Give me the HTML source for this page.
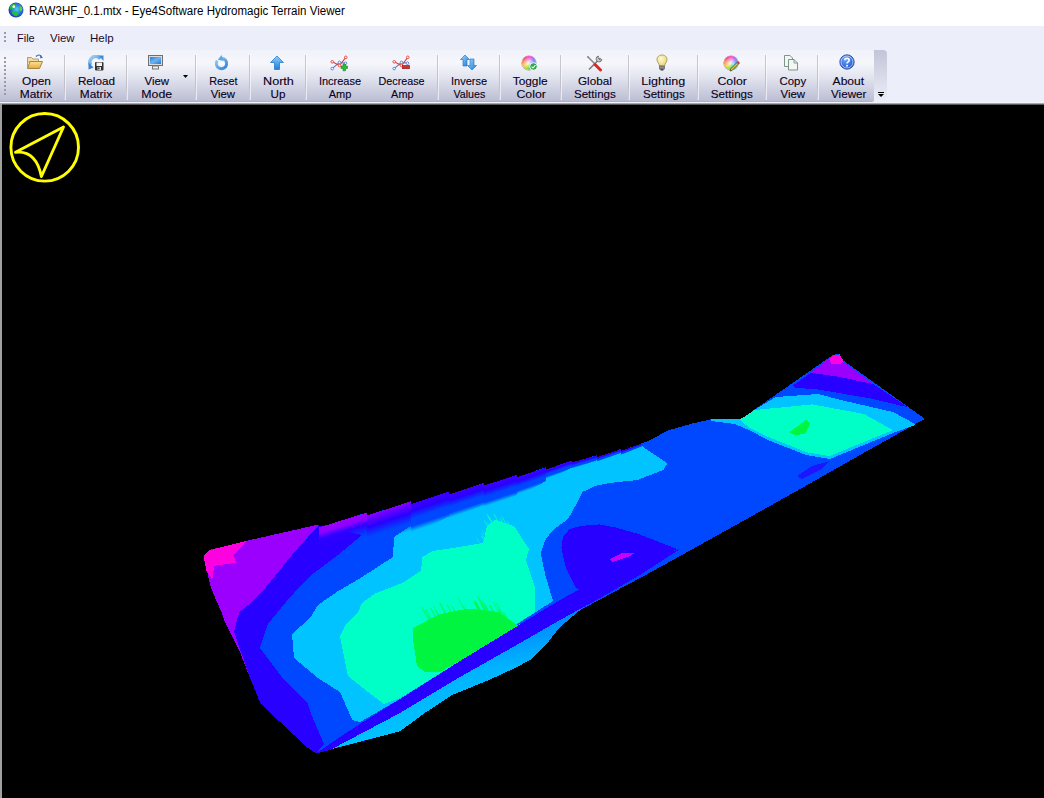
<!DOCTYPE html>
<html><head><meta charset="utf-8">
<style>
*{margin:0;padding:0;box-sizing:border-box}
html,body{width:1044px;height:798px;overflow:hidden;background:#000;font-family:"Liberation Sans",sans-serif;color:#1e0a3c}
#title{position:absolute;left:0;top:0;width:1044px;height:26px;background:#fff}
#title .t{position:absolute;left:29px;top:3.6px;font-size:12px;line-height:14px;color:#000;white-space:nowrap;transform:scaleX(0.961);transform-origin:0 0}
#menu{position:absolute;left:0;top:26px;width:1044px;height:77px;background:#ecEFFA}
#menu .m{position:absolute;top:5.8px;font-size:11px;line-height:13px;color:#1a0a2a}
#tb{position:absolute;left:0px;top:50px;width:875px;height:52px;border-radius:3px 4px 4px 0;background:linear-gradient(#f0f2fa 0%,#f6f7fc 25%,#e0e2ee 55%,#bcbfd4 97%,#a9abc0 100%)}
#ovf{position:absolute;left:874px;top:50px;width:13px;height:52px;border-radius:0 4px 4px 0;background:linear-gradient(#c3c5d8,#eceef9)}
#line{position:absolute;left:0;top:102px;width:1044px;height:3px;background:linear-gradient(#f0f2fc 0 1px,#a8a8a8 1px 2px,#5a5a5a 2px 3px)}
#lb{position:absolute;left:0;top:104px;width:2px;height:694px;background:#a0a0a0}
.sep{position:absolute;top:55px;width:1px;height:45px;background:linear-gradient(#c8c8cc,#c0c0c8 70%,#d0d0dc);box-shadow:1px 0 0 rgba(255,255,255,0.6)}
.btn{position:absolute;top:74.7px;width:80px;margin-left:-40px;text-align:center;font-size:11px;line-height:13px;color:#0c0020;white-space:nowrap}
.ic{position:absolute;top:55px;width:16px;height:16px;margin-left:-8px}
.i{position:absolute}
.btn span{display:inline-block;-webkit-text-stroke:0.12px #0c0020}
#view{position:absolute;left:2px;top:105px;width:1042px;height:693px;background:#000;overflow:hidden}
</style></head><body>
<div id="title">
<svg style="position:absolute;left:7.5px;top:1.5px" width="16" height="16" viewBox="0 0 16 16"><defs><radialGradient id="gl" cx="0.55" cy="0.45" r="0.6"><stop offset="0" stop-color="#4fd0f0"/><stop offset="0.6" stop-color="#2a70d8"/><stop offset="1" stop-color="#1a2ab0"/></radialGradient></defs><circle cx="8" cy="8" r="7.5" fill="url(#gl)"/><path d="M1.6 6.5 C1.8 4 3.5 2 6 1.8 L7.7 2.5 L7.2 5.5 L5.5 6.8 L2.5 6.9Z" fill="#28b83a"/><path d="M4 10 C5 9 8 9.2 10 10.5 L10.5 12.5 L8.5 14.3 L6 13.5 L4.2 11.5Z" fill="#20c040"/><path d="M11.8 4 L13.5 4.8 L14.4 7 L13.8 9 L12 8.8 L11.5 6Z" fill="#50d830"/><circle cx="5.8" cy="4.7" r="1.4" fill="#f4ffe0"/></svg>
<div class="t">RAW3HF_0.1.mtx - Eye4Software Hydromagic Terrain Viewer</div>
</div>
<div id="menu">
<div style="position:absolute;left:4px;top:6px;width:2px;height:12px;background:repeating-linear-gradient(#9a9aa8 0 2px,transparent 2px 4px)"></div>
<div class="m" style="left:17px">File</div>
<div class="m" style="left:50px;transform:scaleX(1.04);transform-origin:0 0">View</div>
<div class="m" style="left:90px;transform:scaleX(1.05);transform-origin:0 0">Help</div>
</div>
<div id="tb"></div>
<div id="ovf"></div>
<div style="position:absolute;left:4px;top:57px;width:2px;height:38px;background:repeating-linear-gradient(#9a9aa8 0 2px,transparent 2px 4px)"></div>
<svg style="position:absolute;left:877px;top:91px" width="8" height="8" viewBox="0 0 8 8"><rect x="1" y="1" width="6" height="1" fill="#000"/><path d="M1 3 H7 L4 6Z" fill="#000"/></svg>

<div class="sep" style="left:64px"></div>
<div class="sep" style="left:126px"></div>
<div class="sep" style="left:195px"></div>
<div class="sep" style="left:249px"></div>
<div class="sep" style="left:305px"></div>
<div class="sep" style="left:437px"></div>
<div class="sep" style="left:499px"></div>
<div class="sep" style="left:560px"></div>
<div class="sep" style="left:628px"></div>
<div class="sep" style="left:697px"></div>
<div class="sep" style="left:765px"></div>
<div class="sep" style="left:817px"></div>

<svg class="i" style="left:26px;top:54px" width="18" height="16" viewBox="0 0 18 16"><defs><linearGradient id="fo1" x1="0" y1="0" x2="0" y2="1"><stop offset="0" stop-color="#fbe29a"/><stop offset="1" stop-color="#e8a93a"/></linearGradient></defs><path d="M1.5 3.5 H5.5 L7 5 H12.5 V8 H1.5Z" fill="#f5dc9c" stroke="#b89d6a" stroke-width="1"/><path d="M1.5 14.5 L4 7.5 H16.5 L13.5 14.5Z" fill="url(#fo1)" stroke="#a8843e" stroke-width="1"/><path d="M1.5 3.5 V14.5" stroke="#b89d6a"/><path d="M10 2.5 Q13 -0.5 15.5 2.5" fill="none" stroke="#2a5fa8" stroke-width="1.2"/><path d="M14 1.5 L17 3.5 L14.5 4.5Z" fill="#2a5fa8"/></svg>
<svg class="i" style="left:88px;top:55px" width="16" height="16" viewBox="0 0 16 16"><defs><linearGradient id="rl" x1="0" y1="0" x2="1" y2="1"><stop offset="0" stop-color="#a8d4f4"/><stop offset="1" stop-color="#2f86dc"/></linearGradient></defs><path d="M2.5 10 A6 6 0 0 1 12.5 3.5" fill="none" stroke="url(#rl)" stroke-width="3.6"/><path d="M10.5 0.5 L15.5 0.5 L15.5 6Z" fill="#3a8ede"/><path d="M0.5 7.5 L5.5 12.5 L0.5 14.5Z" fill="#2f86dc"/><rect x="7" y="7" width="8.5" height="8.5" rx="1" fill="#333"/><rect x="8.5" y="7.5" width="5.5" height="3.5" fill="#f4f4f4"/><rect x="9.5" y="12" width="3.5" height="3" fill="#ddd"/><rect x="10.2" y="12.5" width="1.3" height="2" fill="#333"/></svg>
<svg class="i" style="left:147px;top:54px" width="17" height="17" viewBox="0 0 17 17"><rect x="1.5" y="1.5" width="14" height="10" fill="#dcdcdc" stroke="#6f6f6f"/><defs><linearGradient id="scr" x1="0" y1="0" x2="1" y2="1"><stop offset="0" stop-color="#2b7fd4"/><stop offset="0.5" stop-color="#6ab4f0"/><stop offset="1" stop-color="#2a78cc"/></linearGradient></defs><rect x="3" y="3" width="11" height="7" fill="url(#scr)"/><rect x="5.5" y="12" width="6" height="3" fill="#eee" stroke="#777"/></svg>
<svg class="i" style="left:214px;top:55px" width="16" height="16" viewBox="0 0 16 16"><defs><linearGradient id="rs" x1="0" y1="0" x2="1" y2="1"><stop offset="0" stop-color="#9ccff5"/><stop offset="1" stop-color="#2a82d8"/></linearGradient></defs><path d="M3.2 5.5 A5.2 5.2 0 1 0 8 3.3" fill="none" stroke="url(#rs)" stroke-width="3"/><path d="M8.5 0 L8.5 6.5 L3.5 3.2Z" fill="#5aa8ea" transform="rotate(-20 8 3)"/><circle cx="8.3" cy="8.5" r="1.6" fill="#fff" opacity="0.9"/></svg>
<svg class="i" style="left:269px;top:55px" width="16" height="16" viewBox="0 0 16 16"><defs><linearGradient id="nu" x1="0" y1="0" x2="0" y2="1"><stop offset="0" stop-color="#8cd0ff"/><stop offset="1" stop-color="#1e7fd6"/></linearGradient></defs><path d="M8 1 L14.5 7.5 H10.5 V14.5 H5.5 V7.5 H1.5Z" fill="url(#nu)" stroke="#2a7ccc" stroke-width="0.8"/></svg>
<svg class="i" style="left:330px;top:55px" width="18" height="17" viewBox="0 0 18 17"><path d="M2.2 13.6 L9.5 7.4 L15.5 8.2" fill="none" stroke="#4f7fc8" stroke-width="1.1"/><path d="M2.2 6.8 L9.5 10.5 L15.8 2.3" fill="none" stroke="#e04040" stroke-width="1.1"/><circle cx="2.2" cy="13.6" r="1.3" fill="#fff" stroke="#4f7fc8" stroke-width="0.9"/><circle cx="9.5" cy="7.4" r="1.3" fill="#fff" stroke="#4f7fc8" stroke-width="0.9"/><circle cx="15.5" cy="8.2" r="1.3" fill="#fff" stroke="#4f7fc8" stroke-width="0.9"/><circle cx="2.2" cy="6.8" r="1.3" fill="#fff" stroke="#e04040" stroke-width="0.9"/><circle cx="9.5" cy="10.5" r="1.3" fill="#fff" stroke="#e04040" stroke-width="0.9"/><circle cx="15.8" cy="2.3" r="1.3" fill="#fff" stroke="#e04040" stroke-width="0.9"/><path d="M11 11 H13 V9 H15.5 V11 H17.5 V13.5 H15.5 V15.8 H13 V13.5 H11Z" fill="#30b83a" stroke="#1a8a28" stroke-width="0.6"/></svg>
<svg class="i" style="left:392px;top:55px" width="18" height="17" viewBox="0 0 18 17"><path d="M2.2 13.6 L9.5 7.4 L15.5 8.2" fill="none" stroke="#4f7fc8" stroke-width="1.1"/><path d="M2.2 6.8 L9.5 10.5 L15.8 2.3" fill="none" stroke="#e04040" stroke-width="1.1"/><circle cx="2.2" cy="13.6" r="1.3" fill="#fff" stroke="#4f7fc8" stroke-width="0.9"/><circle cx="9.5" cy="7.4" r="1.3" fill="#fff" stroke="#4f7fc8" stroke-width="0.9"/><circle cx="15.5" cy="8.2" r="1.3" fill="#fff" stroke="#4f7fc8" stroke-width="0.9"/><circle cx="2.2" cy="6.8" r="1.3" fill="#fff" stroke="#e04040" stroke-width="0.9"/><circle cx="9.5" cy="10.5" r="1.3" fill="#fff" stroke="#e04040" stroke-width="0.9"/><circle cx="15.8" cy="2.3" r="1.3" fill="#fff" stroke="#e04040" stroke-width="0.9"/><rect x="10.5" y="10.5" width="7" height="3.2" fill="#d23030" stroke="#8a1515" stroke-width="0.6"/></svg>
<svg class="i" style="left:460px;top:54px" width="17" height="17" viewBox="0 0 17 17"><defs><linearGradient id="iv" x1="0" y1="0" x2="1" y2="1"><stop offset="0" stop-color="#9ed8ff"/><stop offset="1" stop-color="#1f7ad0"/></linearGradient></defs><path d="M5 1 L9.5 5.5 H7 V12 H3 V5.5 H0.5Z" fill="url(#iv)" stroke="#2a7ccc" stroke-width="0.7"/><path d="M12 16 L16.5 11.5 H14 V5 H10 V11.5 H7.5Z" fill="url(#iv)" stroke="#2a7ccc" stroke-width="0.7"/></svg>
<div class="i" style="left:522px;top:56px;width:14px;height:14px;border-radius:50%;background:radial-gradient(circle at 45% 45%,rgba(255,255,255,0.95) 0,rgba(255,255,255,0.5) 3px,rgba(255,255,255,0) 6px),conic-gradient(from 0deg,#ff40c0,#c060ff,#60a0ff,#40e0e0,#40d060,#a0e040,#ffd040,#ff8040,#ff3060,#ff40c0);box-shadow:0 0 0 0.6px rgba(90,90,90,0.6)"></div><svg class="i" style="left:529px;top:62px" width="9" height="9" viewBox="0 0 9 9"><circle cx="4.5" cy="4.5" r="3.8" fill="#2aa84a" stroke="#fff" stroke-width="0.9"/><path d="M2.6 4.6 L4 6 L6.4 3.2" fill="none" stroke="#fff" stroke-width="1.1"/></svg>
<svg class="i" style="left:586px;top:55px" width="17" height="17" viewBox="0 0 17 17"><path d="M2 2 L14 14" stroke="#8a8a8a" stroke-width="1.6"/><path d="M14.5 3 L3 14.5" stroke="#7a7a7a" stroke-width="1.6"/><path d="M12.5 1 A3 3 0 1 0 16 4.5 L14 5 L12 3Z" fill="#c8c8c8" stroke="#666" stroke-width="0.8"/><path d="M9 9.5 L14.5 15" stroke="#d62a2a" stroke-width="3" stroke-linecap="round"/><circle cx="2" cy="2" r="1" fill="#888"/></svg>
<svg class="i" style="left:654px;top:54px" width="16" height="17" viewBox="0 0 16 17"><defs><radialGradient id="bulb" cx="0.4" cy="0.35" r="0.7"><stop offset="0" stop-color="#fffbd0"/><stop offset="1" stop-color="#e2d27a"/></radialGradient></defs><path d="M8 1 C4 1 2.8 4 3 6 C3.2 8.5 5.5 10 5.5 12 H10.5 C10.5 10 12.8 8.5 13 6 C13.2 4 12 1 8 1Z" fill="url(#bulb)" stroke="#b0954a" stroke-width="0.9"/><rect x="5.5" y="12" width="5" height="3" fill="#8a8a8a" stroke="#555" stroke-width="0.6"/><rect x="6.5" y="15" width="3" height="1.5" fill="#444"/></svg>
<div class="i" style="left:724px;top:56px;width:14px;height:14px;border-radius:50%;background:radial-gradient(circle at 45% 45%,rgba(255,255,255,0.95) 0,rgba(255,255,255,0.5) 3px,rgba(255,255,255,0) 6px),conic-gradient(from 0deg,#ff40c0,#c060ff,#60a0ff,#40e0e0,#40d060,#a0e040,#ffd040,#ff8040,#ff3060,#ff40c0);box-shadow:0 0 0 0.6px rgba(90,90,90,0.6)"></div><svg class="i" style="left:729px;top:61px" width="11" height="11" viewBox="0 0 11 11"><path d="M9 0.5 L10.5 2 L3 9.5 L1 10 L1.5 8Z" fill="#f0c040" stroke="#333" stroke-width="0.7"/><path d="M9 0.5 L10.5 2 L9.2 3.3 L7.7 1.8Z" fill="#e03030"/></svg>
<svg class="i" style="left:783px;top:54px" width="16" height="17" viewBox="0 0 16 17"><path d="M1.5 1.5 H7 L9.5 4 V12.5 H1.5Z" fill="#f4f6f4" stroke="#6f8a7f" stroke-width="0.9"/><path d="M5.5 5.5 H11 L14.5 9 V16 H5.5Z" fill="#f4f6f4" stroke="#6f8a7f" stroke-width="0.9"/><path d="M11 5.5 V9 H14.5" fill="none" stroke="#6f8a7f" stroke-width="0.8"/></svg>
<svg class="i" style="left:839px;top:54px" width="16" height="16" viewBox="0 0 16 16"><defs><radialGradient id="ab" cx="0.4" cy="0.3" r="0.8"><stop offset="0" stop-color="#6aa8ff"/><stop offset="1" stop-color="#1a4cc8"/></radialGradient></defs><circle cx="8" cy="8" r="7.2" fill="url(#ab)" stroke="#1f3f9a" stroke-width="0.8"/><circle cx="8" cy="8" r="6" fill="none" stroke="#fff" stroke-width="0.7" opacity="0.8"/><path d="M5.8 6.2 C5.8 3.8 10.2 3.8 10.2 6.2 C10.2 7.8 8 8 8 9.6" fill="none" stroke="#fff" stroke-width="1.6"/><circle cx="8" cy="11.8" r="1" fill="#fff"/></svg>
<svg class="i" style="left:183px;top:75px" width="6" height="4" viewBox="0 0 6 4"><path d="M0 0 H5 L2.5 3Z" fill="#000"/></svg>
<div class="btn" style="left:36.4px"><span style="transform:scaleX(1.077)">Open</span><br><span style="transform:scaleX(1.086)">Matrix</span></div>
<div class="btn" style="left:96px"><span style="transform:scaleX(1.064)">Reload</span><br><span style="transform:scaleX(1.08)">Matrix</span></div>
<div class="btn" style="left:157.2px"><span style="transform:scaleX(1.04)">View</span><br><span style="transform:scaleX(1.12)">Mode</span></div>
<div class="btn" style="left:223.3px"><span style="transform:scaleX(0.986)">Reset</span><br><span style="transform:scaleX(1.03)">View</span></div>
<div class="btn" style="left:278.2px"><span style="transform:scaleX(1.148)">North</span><br><span style="transform:scaleX(1.06)">Up</span></div>
<div class="btn" style="left:340px"><span style="transform:scaleX(1.0)">Increase</span><br><span style="transform:scaleX(1.0)">Amp</span></div>
<div class="btn" style="left:402px"><span style="transform:scaleX(0.978)">Decrease</span><br><span style="transform:scaleX(0.99)">Amp</span></div>
<div class="btn" style="left:469px"><span style="transform:scaleX(1.0)">Inverse</span><br><span style="transform:scaleX(0.97)">Values</span></div>
<div class="btn" style="left:530.7px"><span style="transform:scaleX(1.078)">Toggle</span><br><span style="transform:scaleX(1.12)">Color</span></div>
<div class="btn" style="left:594.9px"><span style="transform:scaleX(1.065)">Global</span><br><span style="transform:scaleX(1.054)">Settings</span></div>
<div class="btn" style="left:663.5px"><span style="transform:scaleX(1.14)">Lighting</span><br><span style="transform:scaleX(1.054)">Settings</span></div>
<div class="btn" style="left:732px"><span style="transform:scaleX(1.12)">Color</span><br><span style="transform:scaleX(1.06)">Settings</span></div>
<div class="btn" style="left:792.5px"><span style="transform:scaleX(1.036)">Copy</span><br><span style="transform:scaleX(1.04)">View</span></div>
<div class="btn" style="left:848.6px"><span style="transform:scaleX(1.1)">About</span><br><span style="transform:scaleX(1.058)">Viewer</span></div>

<div id="line"></div>
<div id="lb"></div>
<div id="view"></div>
<svg style="position:absolute;left:0;top:0" width="1044" height="798" viewBox="0 0 1044 798"><defs><linearGradient id="undg" x1="0" y1="0" x2="0.3" y2="1"><stop offset="0" stop-color="#0046ff"/><stop offset="0.6" stop-color="#00b4ff"/><stop offset="1" stop-color="#00c8ff"/></linearGradient><linearGradient id="w1" gradientUnits="userSpaceOnUse" x1="342.9" y1="520.0" x2="349.5" y2="541.0"><stop offset="0" stop-color="#9b00ff"/><stop offset="0.25" stop-color="#9000ff"/><stop offset="0.5" stop-color="#3000ff"/><stop offset="1" stop-color="#2800ff" stop-opacity="0"/></linearGradient><linearGradient id="w2" gradientUnits="userSpaceOnUse" x1="388.7" y1="508.5" x2="397.5" y2="534.9"><stop offset="0" stop-color="#8800ff"/><stop offset="0.15" stop-color="#6000ff"/><stop offset="0.4" stop-color="#2800ff"/><stop offset="0.75" stop-color="#0048ff"/><stop offset="1" stop-color="#0048ff" stop-opacity="0"/></linearGradient><linearGradient id="w3" gradientUnits="userSpaceOnUse" x1="429.8" y1="498.0" x2="438.1" y2="522.9"><stop offset="0" stop-color="#4000ff"/><stop offset="0.25" stop-color="#2800ff"/><stop offset="0.55" stop-color="#0048ff"/><stop offset="0.8" stop-color="#0048ff"/><stop offset="1" stop-color="#0048ff" stop-opacity="0"/></linearGradient><linearGradient id="w4" gradientUnits="userSpaceOnUse" x1="466.4" y1="488.7" x2="473.4" y2="509.8"><stop offset="0" stop-color="#4000ff"/><stop offset="0.25" stop-color="#2800ff"/><stop offset="0.55" stop-color="#0048ff"/><stop offset="0.8" stop-color="#0048ff"/><stop offset="1" stop-color="#0048ff" stop-opacity="0"/></linearGradient><linearGradient id="w5" gradientUnits="userSpaceOnUse" x1="500.1" y1="480.4" x2="506.3" y2="499.4"><stop offset="0" stop-color="#4000ff"/><stop offset="0.25" stop-color="#2800ff"/><stop offset="0.55" stop-color="#0048ff"/><stop offset="0.8" stop-color="#0048ff"/><stop offset="1" stop-color="#0048ff" stop-opacity="0"/></linearGradient><linearGradient id="w6" gradientUnits="userSpaceOnUse" x1="531.2" y1="472.4" x2="536.5" y2="487.3"><stop offset="0" stop-color="#4000ff"/><stop offset="0.25" stop-color="#2800ff"/><stop offset="0.55" stop-color="#0048ff"/><stop offset="0.8" stop-color="#0048ff"/><stop offset="1" stop-color="#0048ff" stop-opacity="0"/></linearGradient><linearGradient id="w7" gradientUnits="userSpaceOnUse" x1="559.0" y1="464.9" x2="561.8" y2="473.0"><stop offset="0" stop-color="#4000ff"/><stop offset="0.25" stop-color="#2800ff"/><stop offset="0.55" stop-color="#0048ff"/><stop offset="0.8" stop-color="#0048ff"/><stop offset="1" stop-color="#0048ff" stop-opacity="0"/></linearGradient><linearGradient id="w8" gradientUnits="userSpaceOnUse" x1="584.3" y1="458.9" x2="585.9" y2="464.4"><stop offset="0" stop-color="#4000ff"/><stop offset="0.25" stop-color="#2800ff"/><stop offset="0.55" stop-color="#0048ff"/><stop offset="0.8" stop-color="#0048ff"/><stop offset="1" stop-color="#0048ff" stop-opacity="0"/></linearGradient><linearGradient id="w9" gradientUnits="userSpaceOnUse" x1="608.6" y1="453.2" x2="610.0" y2="457.2"><stop offset="0" stop-color="#4000ff"/><stop offset="0.25" stop-color="#2800ff"/><stop offset="0.55" stop-color="#0048ff"/><stop offset="0.8" stop-color="#0048ff"/><stop offset="1" stop-color="#0048ff" stop-opacity="0"/></linearGradient><linearGradient id="w10" gradientUnits="userSpaceOnUse" x1="631.1" y1="447.2" x2="632.4" y2="450.5"><stop offset="0" stop-color="#4000ff"/><stop offset="0.25" stop-color="#2800ff"/><stop offset="0.55" stop-color="#0048ff"/><stop offset="0.8" stop-color="#0048ff"/><stop offset="1" stop-color="#0048ff" stop-opacity="0"/></linearGradient></defs><circle cx="44.7" cy="147.3" r="33.8" fill="none" stroke="#ffff00" stroke-width="2.9"/>
<path d="M63.5 127 L15.5 152.3 Q36 150 41.4 176.5 Z" fill="none" stroke="#ffff00" stroke-width="2.9" stroke-linejoin="round"/>
<g shape-rendering="crispEdges">
<polygon fill="#0048ff" points="203.6,556 209.4,550 246.7,540.8 318.6,524.5 319.20000000000005,527.5 366.5,512.6 367.1,515.6 410.3,501.3 410.90000000000003,504.3 448.6,491.6 449.20000000000005,494.40000000000003 483.6,483.0 484.20000000000005,485.5 516,475.2 516.6,477.59999999999997 545.7,467.2 546.3000000000001,469.4 571.6,460.5 572.2,462.5 596.4,455.3 597.0,457.3 620.3,449.2 620.9,451.0 641.4,443.5 650,440.2 667.3,430.7 690.3,424 711.3,419.2 744,419.2 751.6,411.5 833.4,354.6 839.2,354.2 843,360.3 923.5,417.8 923.5,419.5 860,455 794,492.5 727,530 700,545 647.5,574 580,610.2 560,627 545,646 530,660 515,668 489,680 451.4,695.3 424.3,713.3 400,731.3 316.2,753.3 308.2,748.3 276,718.2 260,702.2 250,678 240,652 224,620 221.8,612.6 216,600 210.3,585.8"/>
<polygon fill="url(#undg)" points="330,745 400,706 460,673 520,640 580,607 600,596 580,610.2 560,627 545,646 530,660 515,668 489,680 451.4,695.3 424.3,713.3 400,731.3 320,752"/>
<polygon fill="#9b00ff" points="203.6,556 209.4,550 246.7,540.8 318.6,524.5 298.4,547.5 287,561 264,589.6 250.5,603 239,612.6 234,632 248,672 250,678 240,652 224,620 221.8,612.6 216,600 210.3,585.8"/>
<polygon fill="#ff00e1" points="203.6,556 209.4,550.3 246.7,540.8 241,547.5 233.3,555 236.2,562.8 214.2,565.7 212.2,580 206.5,570.5"/>
<polygon fill="#2800ff" points="318.6,525.4 298.4,547.5 287,561 264,589.6 250.5,603 239,612.6 234,632 248,672 250,678 260,702.2 276,718.2 308.2,748.3 316.2,753.3 324,744 312,716 308,704 284,680 260,648 268,624 286,602 294,593 310,576 338,555 362,535"/>
<polygon fill="#00c3ff" points="394,537 420,519.8 440,510.6 462,504.4 470,501.5 484,498.3 500,493.4 516,487.6 530,484.3 545,478.0 547,475.3 560,469.8 572,466.2 585,462.4 596,458.5 610,455.5 620,451.8 630,450.0 641.4,445.7 650,451.7 667.3,463.2 663.4,470 637.3,480 609.7,483 594.4,486.1 582.5,492 577.5,502 568,519 553,530 545.3,539.8 540.7,553.6 545.3,575 553,601 460,661 400,699 360,722 352.3,720 340,692 318,678 294,658 292,634 310,618 318,605 337.5,591.5 360.5,578 393,557"/>
<polygon fill="#00ffc6" points="422.5,556.8 433,551 453,548 483,543 487,526 495,520 514,526 529,549 526,560 535,587 535,612 460,661 400,698 384,704 368,692 348,676 340,636 346,624 358,612 362,603 375,593.6 402.6,582.8 421,570.6"/>
<polygon fill="#00f540" points="413,628 440,614 469,608.5 499,612 517,625 521,624 460,661 440,672 425,672 417,666 413,640"/>
<g shape-rendering="auto"><path d="M455.8 613.0 L452.1 606.4" stroke="#00f540" stroke-width="0.99" opacity="0.85"/><path d="M431.9 620.2 L425.9 609.3" stroke="#00f540" stroke-width="0.82" opacity="0.85"/><path d="M430.5 620.9 L424.7 610.3" stroke="#00f540" stroke-width="0.62" opacity="0.85"/><path d="M466.2 611.0 L463.0 605.3" stroke="#00f540" stroke-width="0.65" opacity="0.85"/><path d="M465.3 611.2 L457.6 597.1" stroke="#00f540" stroke-width="0.67" opacity="0.85"/><path d="M446.2 614.8 L439.7 602.9" stroke="#00f540" stroke-width="1.17" opacity="0.85"/><path d="M479.8 611.8 L474.7 602.4" stroke="#00f540" stroke-width="1.19" opacity="0.85"/><path d="M429.4 621.5 L421.5 607.0" stroke="#00f540" stroke-width="0.77" opacity="0.85"/><path d="M438.7 616.7 L435.2 610.4" stroke="#00f540" stroke-width="0.79" opacity="0.85"/><path d="M502.5 616.6 L498.7 609.6" stroke="#00f540" stroke-width="0.95" opacity="0.85"/><path d="M485.7 612.4 L480.7 603.4" stroke="#00f540" stroke-width="0.93" opacity="0.85"/><path d="M431.0 620.7 L427.9 615.0" stroke="#00f540" stroke-width="0.72" opacity="0.85"/><path d="M489.6 612.9 L484.3 603.2" stroke="#00f540" stroke-width="0.79" opacity="0.85"/><path d="M480.6 611.9 L475.1 601.9" stroke="#00f540" stroke-width="0.78" opacity="0.85"/><path d="M500.5 615.1 L493.5 602.4" stroke="#00f540" stroke-width="0.75" opacity="0.85"/><path d="M479.6 611.7 L473.6 601.0" stroke="#00f540" stroke-width="1.13" opacity="0.85"/><path d="M494.3 613.5 L489.8 605.3" stroke="#00f540" stroke-width="1.19" opacity="0.85"/><path d="M436.2 618.0 L430.9 608.4" stroke="#00f540" stroke-width="1.05" opacity="0.85"/><path d="M439.4 616.3 L433.7 605.9" stroke="#00f540" stroke-width="0.62" opacity="0.85"/><path d="M488.5 612.8 L481.1 599.4" stroke="#00f540" stroke-width="0.94" opacity="0.85"/><path d="M508.2 620.6 L503.5 612.2" stroke="#00f540" stroke-width="1.02" opacity="0.85"/><path d="M481.5 612.0 L475.2 600.6" stroke="#00f540" stroke-width="0.87" opacity="0.85"/><path d="M504.8 618.2 L496.3 602.8" stroke="#00f540" stroke-width="0.88" opacity="0.85"/><path d="M488.1 612.7 L485.0 607.1" stroke="#00f540" stroke-width="1.02" opacity="0.85"/><path d="M486.5 612.5 L477.7 596.6" stroke="#00f540" stroke-width="1.09" opacity="0.85"/><path d="M452.0 613.7 L447.0 604.5" stroke="#00f540" stroke-width="1.00" opacity="0.85"/><path d="M480.8 545.0 L476.7 538.2" stroke="#00ffc6" stroke-width="0.68" opacity="0.8"/><path d="M484.1 540.3 L481.5 536.0" stroke="#00ffc6" stroke-width="0.98" opacity="0.8"/><path d="M484.5 538.5 L481.2 533.0" stroke="#00ffc6" stroke-width="0.80" opacity="0.8"/><path d="M510.5 526.9 L507.8 522.4" stroke="#00ffc6" stroke-width="0.82" opacity="0.8"/><path d="M499.2 523.3 L493.7 514.0" stroke="#00ffc6" stroke-width="1.01" opacity="0.8"/><path d="M510.2 526.8 L506.8 521.1" stroke="#00ffc6" stroke-width="0.81" opacity="0.8"/><path d="M492.6 523.8 L487.0 514.5" stroke="#00ffc6" stroke-width="1.08" opacity="0.8"/><path d="M485.3 535.3 L482.2 530.2" stroke="#00ffc6" stroke-width="0.72" opacity="0.8"/><path d="M488.2 527.1 L484.0 520.2" stroke="#00ffc6" stroke-width="0.89" opacity="0.8"/><path d="M489.2 526.4 L486.8 522.3" stroke="#00ffc6" stroke-width="0.81" opacity="0.8"/><path d="M492.9 523.6 L488.5 516.2" stroke="#00ffc6" stroke-width="1.08" opacity="0.8"/><path d="M504.2 524.9 L499.9 517.8" stroke="#00ffc6" stroke-width="0.91" opacity="0.8"/><path d="M503.7 524.7 L501.1 520.4" stroke="#00ffc6" stroke-width="1.05" opacity="0.8"/><path d="M507.3 525.9 L501.8 516.6" stroke="#00ffc6" stroke-width="1.00" opacity="0.8"/></g>
<polygon fill="#2800ff" points="316.2,753.3 340,737 360,724 400,699 460,661 560,600 600,578 640,562 680,549 640,575 600,598 560,620 520,643 460,677 400,713 330,750"/>
<polygon fill="url(#w1)" points="318.9,527.5 367.1,512.6 367.1,540.5 318.9,545.7"/>
<polygon fill="url(#w2)" points="366.8,515.6 410.9,501.3 410.9,532.0 366.8,543.6"/>
<polygon fill="url(#w3)" points="410.6,504.3 449.2,491.6 449.2,516.4 410.6,535.0"/>
<polygon fill="url(#w4)" points="448.9,494.4 484.2,483.0 484.2,505.0 448.9,519.1"/>
<polygon fill="url(#w5)" points="483.9,485.5 516.6,475.2 516.6,495.2 483.9,507.5"/>
<polygon fill="url(#w6)" points="516.3,477.6 546.3,467.2 546.3,480.9 516.3,497.5"/>
<polygon fill="url(#w7)" points="546.0,469.4 572.2,460.5 572.2,467.5 546.0,480.3"/>
<polygon fill="url(#w8)" points="571.9,462.5 597.0,455.3 597.0,460.3 571.9,469.5"/>
<polygon fill="url(#w9)" points="596.7,457.3 620.9,449.2 620.9,453.2 596.7,462.3"/>
<polygon fill="url(#w10)" points="620.6,451.0 642.0,443.5 642.0,447.0 620.6,455.0"/>
<polygon fill="#2800ff" points="576,588 565.2,565.8 561.4,547.4 563,536.7 569.8,529 580.6,526 599,524.4 615.8,527.5 637.3,533.6 657.2,541.3 677.1,549 640,568 610,584 590,594"/>
<polygon fill="#c800ff" points="609.6,559 622,553 635,552.7 630,556 612,562"/>
<polygon fill="#00c3ff" points="711.3,419.2 744,419.2 751.6,411.5 776,397 818,394 845,401 893,412 914,423.5 915,425 893,433 830,459 806,455 768,440 749,430 735,424 711.3,421"/>
<polygon fill="#00ffc6" points="739.6,419.7 755,410 812.4,404.4 864,414 892.8,430.2 829.6,456 806.6,452.3 768.3,437 749,427.4"/>
<polygon fill="#00f540" points="789.4,432.2 806.6,419.7 810.5,423.5 804.7,434 795,435"/>
<polygon fill="#2800ff" points="793,385.5 812,372 836,376 873,384 908,407.3 869.4,398.2 814.8,389 795,388"/>
<polygon fill="#9b00ff" points="811,372.8 833.4,355 845,363.2 873,384 836.7,376.4"/>
<polygon fill="#ff00e1" points="829,359 834,355 839.5,354.4 843.5,361 840,364 831,363.5"/>
<polygon fill="#2800ff" opacity="0.7" points="797,476 812,466 830,461 820,470 802,479"/>
</g></svg>
</body></html>
